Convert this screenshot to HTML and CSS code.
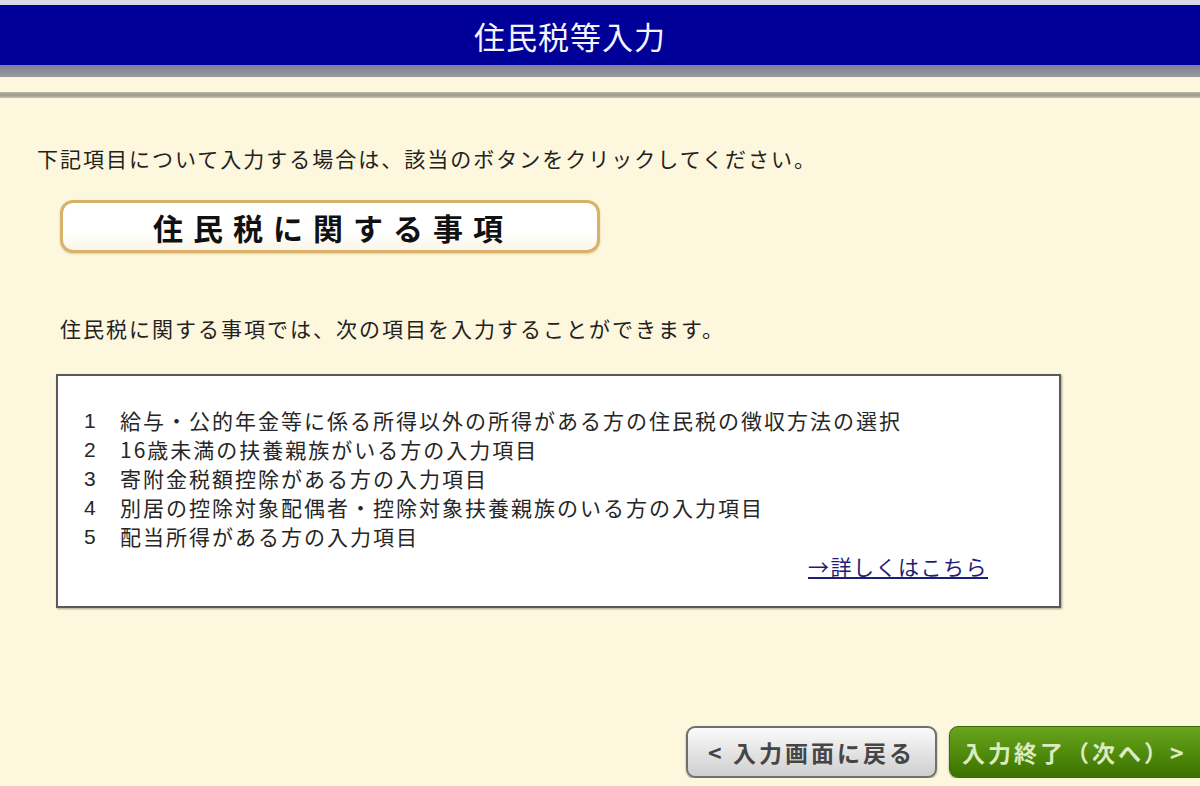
FILE: index.html
```html
<!DOCTYPE html>
<html lang="ja">

<head>
    <meta charset="UTF-8">
    <meta name="viewport" content="width=device-width, initial-scale=1.0">
    <title>住民税等入力</title>
    <link rel="stylesheet" href="styles.css">
</head>

<body>
    <!-- 画面タイトル -->
    <header class="page-header">
        <h1>住民税等入力</h1>
    </header>
    <div class="header-band"></div>
    <div class="header-rule"></div>

    <main class="content">
        <p class="intro">下記項目について入力する場合は、該当のボタンをクリックしてください。</p>

        <a href="#" class="section-btn">住民税に関する事項</a>

        <p class="desc">住民税に関する事項では、次の項目を入力することができます。</p>

        <div class="detail-box">
            <ol class="item-list">
                <li><span class="num">1</span>給与・公的年金等に係る所得以外の所得がある方の住民税の徴収方法の選択</li>
                <li><span class="num">2</span>16歳未満の扶養親族がいる方の入力項目</li>
                <li><span class="num">3</span>寄附金税額控除がある方の入力項目</li>
                <li><span class="num">4</span>別居の控除対象配偶者・控除対象扶養親族のいる方の入力項目</li>
                <li><span class="num">5</span>配当所得がある方の入力項目</li>
            </ol>
            <div class="more">
                <a href="#">→詳しくはこちら</a>
            </div>
        </div>

        <!-- 画面下部のボタン -->
        <div class="nav-buttons">
            <button class="btn btn-back">&lt; 入力画面に戻る</button>
            <button class="btn btn-next">入力終了（次へ）&gt;</button>
        </div>
    </main>
</body>

</html>
```

FILE: styles.css
```css
:root {
    --bg-cream: #fdf7dd;
    --title-blue: #000099;
    --text-dark: #222222;
    --tan-border: #d8b268;
}

* {
    box-sizing: border-box;
}

html,
body {
    overflow: hidden;
}

body {
    margin: 0;
    background: var(--bg-cream);
    color: var(--text-dark);
    font-family: "Noto Sans CJK JP", "Liberation Sans", sans-serif;
}

/* ヘッダー */
.page-header {
    height: 65px;
    border-top: 5px solid #d9d9e6;
    background: var(--title-blue);
    display: flex;
    align-items: center;
    justify-content: center;
}

.page-header h1 {
    margin: 0 0 0 -60px;
    color: #f4f4ff;
    font-size: 31px;
    font-weight: 400;
    letter-spacing: 1px;
}

.header-band {
    height: 12px;
    background: linear-gradient(#7f7f95, #9a9a9e);
}

.header-rule {
    height: 6px;
    margin-top: 15px;
    background: linear-gradient(#b9b8a6, #9c9b8c, #c6c4b0);
}

/* 本文 */
.content {
    padding: 0 0 0 37px;
}

.intro {
    margin: 45px 0 0;
    font-size: 21px;
    line-height: 30px;
    letter-spacing: 2px;
}

.section-btn {
    display: flex;
    align-items: center;
    justify-content: center;
    width: 540px;
    height: 53px;
    margin: 27px 0 0 23px;
    border: 3px solid var(--tan-border);
    border-radius: 13px;
    background: linear-gradient(#ffffff 60%, #fbf6ea);
    box-shadow: 0 1px 2px rgba(160, 120, 40, 0.35);
    color: #111111;
    font-size: 30px;
    font-weight: 700;
    letter-spacing: 10px;
    text-decoration: none;
    padding-left: 6px;
}

.desc {
    margin: 60px 0 0 23px;
    font-size: 21px;
    line-height: 30px;
    letter-spacing: 2px;
}

.detail-box {
    width: 1005px;
    height: 234px;
    margin: 31px 0 0 19px;
    padding: 30px 71px 0 22px;
    background: #ffffff;
    border: 2px solid #5a5a5a;
    box-shadow: 1px 1px 2px rgba(0, 0, 0, 0.35);
}

.item-list {
    margin: 0;
    padding: 0;
    list-style: none;
}

.item-list li {
    display: flex;
    font-size: 21px;
    line-height: 29px;
    letter-spacing: 2px;
    color: #262626;
}

.item-list .num {
    width: 40px;
    padding-left: 4px;
    font-family: "Liberation Sans", sans-serif;
}

.more {
    text-align: right;
    line-height: 30px;
}

.more a {
    color: #1d1d7a;
    font-size: 21px;
    letter-spacing: 1.5px;
}

/* 下部ボタン */
.nav-buttons {
    display: flex;
    justify-content: flex-end;
    gap: 12px;
    margin: 118px -9px 0 0;
}

.btn {
    height: 52px;
    border-radius: 9px;
    font-family: "Noto Sans CJK JP", "Liberation Sans", sans-serif;
    font-size: 23px;
    font-weight: 700;
    cursor: pointer;
}

.btn-back {
    width: 251px;
    border: 2px solid #6f6f6f;
    background: linear-gradient(#fbfbfb, #e2e2e2 55%, #cfcfcf);
    color: #454545;
    letter-spacing: 3px;
    box-shadow: 0 1px 2px rgba(0, 0, 0, 0.4);
}

.btn-next {
    width: 260px;
    border: 1px solid #3c6a08;
    background: linear-gradient(#6aa41e, #4e8a0c 55%, #3b7100);
    color: #dcebc0;
    letter-spacing: 3px;
    text-align: left;
    padding-left: 12px;
    box-shadow: 0 1px 2px rgba(0, 0, 0, 0.4);
}
```
